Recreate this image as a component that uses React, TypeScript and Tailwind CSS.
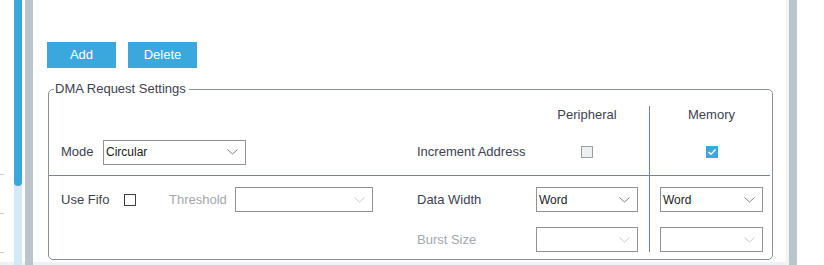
import React from "react";

const Chevron = ({ disabled }: { disabled?: boolean }) => (
  <svg width="11" height="6" viewBox="0 0 11 6" className="shrink-0">
    <polyline
      points="0.5,0.5 5.5,5 10.5,0.5"
      fill="none"
      stroke={disabled ? "#c9ccd1" : "#7d828a"}
      strokeWidth="1"
    />
  </svg>
);

const Select = ({ value, w, disabled }: { value?: string; w: string; disabled?: boolean }) => (
  <div
    className={`${w} h-[25px] flex items-center justify-between border border-[#8f9399] bg-white pl-[2px] pr-[7px] text-[12px] text-[#222]`}
  >
    <span>{value ?? ""}</span>
    <Chevron disabled={disabled} />
  </div>
);

const Box = ({ checked, light }: { checked?: boolean; light?: boolean }) =>
  checked ? (
    <div className="w-[12px] h-[12px] bg-[#3aa8dc] flex items-center justify-center">
      <svg width="10" height="8" viewBox="0 0 10 8">
        <polyline points="1.5,4 4,6.3 8.5,1.5" fill="none" stroke="white" strokeWidth="1.5" />
      </svg>
    </div>
  ) : (
    <div
      className={`w-[12px] h-[12px] border ${light ? "border-[#9a9ea4] bg-[#eef0f3]" : "border-[#3c3f45] bg-white"}`}
    />
  );

export default function App() {
  return (
    <div
      className="w-[824px] h-[265px] flex bg-white overflow-hidden text-[13px] text-[#3d4250]"
      style={{ fontFamily: '"Liberation Sans", Arial, sans-serif' }}
    >
      {/* left edge with ticks */}
      <div className="w-[14px] h-full flex flex-col border-b-[3px] border-[#f0f2f5]">
        <div className="h-[174px]" />
        <div className="w-[4px] h-px bg-[#c8ccd0]" />
        <div className="h-[38px]" />
        <div className="w-[4px] h-px bg-[#c8ccd0]" />
        <div className="h-[38px]" />
        <div className="w-[4px] h-px bg-[#c8ccd0]" />
      </div>
      {/* scrollbar */}
      <div className="w-[8px] h-full bg-[#d6e7f5] flex flex-col">
        <div className="h-[186px] bg-[#3aa8dc] rounded-b-[4px]" />
      </div>
      <div className="w-[3px] h-full border-b-[3px] border-[#f0f2f5]" />
      <div className="w-[8px] h-full bg-[#b9c4cb]" />
      {/* content */}
      <div className="w-[753px] h-full flex flex-col border-b-[3px] border-[#f0f2f5]">
        <div className="flex gap-[12px] pl-[14px] pt-[42px]">
          <button className="w-[69px] h-[26px] bg-[#3aa8dc] text-white text-[13px]">Add</button>
          <button className="w-[69px] h-[26px] bg-[#3aa8dc] text-white text-[13px]">Delete</button>
        </div>
        <fieldset className="ml-[15px] mt-[13px] w-[725px] h-[179px] border border-[#8a9098] rounded-[5px] px-0">
          <legend className="ml-[5px] px-px pr-[3px] text-[13px] leading-[16px] text-[#3d4250]">
            DMA Request Settings
          </legend>
          <div className="mr-[2px] mt-[9px] flex flex-col">
            {/* header */}
            <div className="flex h-[18px]">
              <div className="w-[600px] flex">
                <div className="w-[487px]" />
                <div className="w-[102px] text-center leading-[18px]">Peripheral</div>
              </div>
              <div className="flex-1 border-l border-[#6e81b8] pl-[10px]">
                <div className="w-[103px] text-center leading-[18px]">Memory</div>
              </div>
            </div>
            {/* row 1 */}
            <div className="flex h-[52px] border-b border-[#6e81b8]">
              <div className="w-[600px] flex items-center pl-[12px] pt-[5px]">
                <div className="w-[42px]">Mode</div>
                <Select value="Circular" w="w-[143px]" />
                <div className="w-[171px]" />
                <div className="w-[119px]">Increment Address</div>
                <div className="w-[102px] flex justify-center">
                  <Box light />
                </div>
              </div>
              <div className="flex-1 border-l border-[#6e81b8] pl-[10px] flex items-center pt-[5px]">
                <div className="w-[103px] flex justify-center">
                  <Box checked />
                </div>
              </div>
            </div>
            {/* row 2 */}
            <div className="flex h-[36px]">
              <div className="w-[600px] flex items-end pl-[12px]">
                <div className="w-[63px] leading-[25px]">Use Fifo</div>
                <div className="h-[25px] flex items-center w-[45px]">
                  <Box />
                </div>
                <div className="w-[66px] leading-[25px] text-[#a3a7ae]">Threshold</div>
                <Select w="w-[138px]" disabled />
                <div className="w-[44px]" />
                <div className="w-[119px] leading-[25px]">Data Width</div>
                <Select value="Word" w="w-[102px]" />
              </div>
              <div className="flex-1 border-l border-[#6e81b8] pl-[10px] flex items-end">
                <Select value="Word" w="w-[103px]" />
              </div>
            </div>
            {/* row 3 */}
            <div className="flex h-[40px]">
              <div className="w-[600px] flex items-end pl-[12px]">
                <div className="w-[356px]" />
                <div className="w-[119px] leading-[25px] text-[#a3a7ae]">Burst Size</div>
                <Select w="w-[102px]" disabled />
              </div>
              <div className="flex-1 border-l border-[#6e81b8] pl-[10px] flex items-end">
                <Select w="w-[103px]" disabled />
              </div>
            </div>
          </div>
        </fieldset>
      </div>
      <div className="w-[3px] h-full bg-[#f3f4f6]" />
      <div className="w-[8px] h-full bg-[#b9c4cb]" />
      <div className="flex-1 h-full bg-white" />
    </div>
  );
}
